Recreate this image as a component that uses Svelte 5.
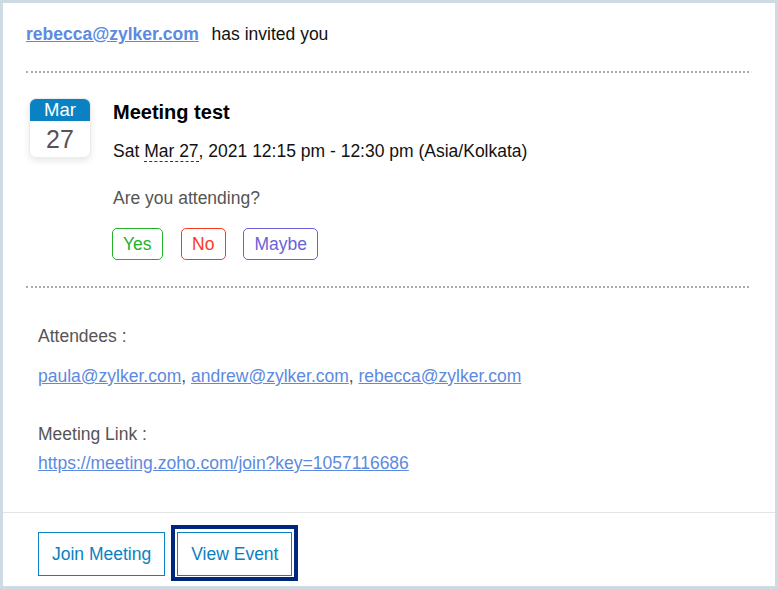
<script>
  const responses = [
    { label: 'Yes', cls: 'yes' },
    { label: 'No', cls: 'no' },
    { label: 'Maybe', cls: 'maybe' }
  ];
  const attendees = ['paula@zylker.com', 'andrew@zylker.com', 'rebecca@zylker.com'];
</script>

<div class="card">
  <div class="invite">
    <a href="#top" class="sender">rebecca@zylker.com</a>
    <span class="invited">has invited you</span>
  </div>

  <div class="event">
    <div class="calendar">
      <div class="month">Mar</div>
      <div class="day">27</div>
    </div>
    <div class="details">
      <h1>Meeting test</h1>
      <p class="when">Sat <span class="date">Mar 27</span>, 2021 12:15 pm - 12:30 pm (Asia/Kolkata)</p>
      <p class="question">Are you attending?</p>
      <div class="responses">
        {#each responses as r}
          <button class={r.cls}>{r.label}</button>
        {/each}
      </div>
    </div>
  </div>

  <div class="info">
    <p class="label">Attendees :</p>
    <p class="people">
      {#each attendees as a, i}
        <a href="#top">{a}</a>{i < attendees.length - 1 ? ', ' : ''}
      {/each}
    </p>
    <p class="label link-label">Meeting Link :</p>
    <a href="#top">https://meeting.zoho.com/join?key=1057116686</a>
  </div>

  <div class="actions">
    <button>Join Meeting</button>
    <span class="focus"><button>View Event</button></span>
  </div>
</div>

<style>
  :global(body) {
    margin: 0;
    background: #cedbe2;
  }

  .card {
    box-sizing: border-box;
    width: 778px;
    height: 589px;
    border: 3px solid #cedbe2;
    background: #fff;
    font-family: "Liberation Sans", Arial, sans-serif;
    font-size: 17.5px;
    color: #111;
    display: flex;
    flex-direction: column;
  }

  a {
    color: #5c8ae0;
  }

  p, h1 {
    margin: 0;
  }

  .invite {
    margin: 0 26px 0 23px;
    height: 70px;
    padding-top: 21px;
    box-sizing: border-box;
    line-height: 21px;
    border-bottom: 2px dotted #aaa;
  }

  .sender {
    font-weight: bold;
  }

  .invited {
    margin-left: 8px;
  }

  .event {
    margin: 0 26px 0 23px;
    height: 215px;
    padding: 25px 0 0 3px;
    box-sizing: border-box;
    border-bottom: 2px dotted #aaa;
    display: flex;
    gap: 22px;
  }

  .calendar {
    width: 62px;
    height: 60px;
    box-sizing: border-box;
    border-radius: 7px;
    background: #fff;
    border: 1px solid #ececec;
    box-shadow: 0 3px 6px rgba(0, 0, 0, 0.09);
    overflow: hidden;
    text-align: center;
  }

  .month {
    margin-top: -1px;
    height: 23px;
    background: #0a81c2;
    color: #fff;
    font-size: 18.5px;
    line-height: 23px;
  }

  .day {
    font-size: 25px;
    color: #555;
    line-height: 37px;
  }

  h1 {
    font-size: 20px;
    font-weight: bold;
    color: #000;
    line-height: 24px;
    margin-top: 2px;
  }

  .when {
    margin-top: 17px;
    line-height: 21px;
  }

  .date {
    border-bottom: 1px dashed #333;
  }

  .question {
    margin-top: 26px;
    color: #555;
    line-height: 21px;
  }

  .responses {
    display: flex;
    gap: 17px;
    margin: 19px 0 0 -1px;
  }

  button {
    font: inherit;
    background: #fff;
    cursor: pointer;
  }

  .responses button {
    height: 32px;
    padding: 0 10.5px;
    border-radius: 5px;
    border: 1px solid;
  }

  .responses .yes {
    padding: 0 10px;
    margin-right: 1px;
  }

  .yes { color: #24b02a; border-color: #24b02a; }
  .no { color: #fa3b1e; border-color: #fa3b1e; }
  .maybe { color: #6b63d6; border-color: #6b63d6; }

  .info {
    flex: 1;
    padding: 38px 35px 0;
    color: #555;
    line-height: 21px;
  }

  .people {
    margin-top: 19px;
  }

  .link-label {
    margin-top: 37px;
    margin-bottom: 8px;
  }

  .actions {
    height: 74px;
    box-sizing: border-box;
    border-top: 1px solid #e2e4e6;
    padding: 19px 35px 0;
    display: flex;
    align-items: flex-start;
    gap: 6px;
  }

  .actions button {
    height: 44px;
    padding: 0 13px;
    border: 1px solid #0a81c2;
    color: #0a81c2;
  }

  .focus {
    display: block;
    margin-top: -7px;
    padding: 3px 2px 1px;
    border: 4px solid #00277f;
  }
</style>
